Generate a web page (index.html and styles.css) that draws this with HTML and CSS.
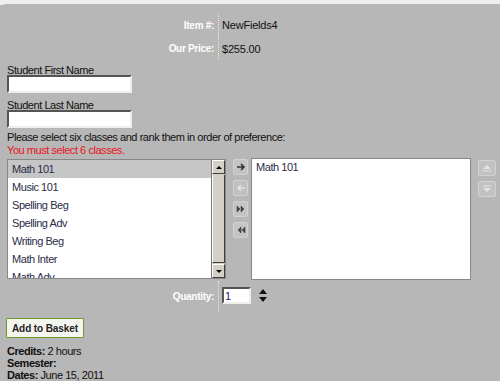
FILE: index.html
```html
<!DOCTYPE html>
<html lang="en">
<head>
    <meta charset="UTF-8">
    <title>NewFields4</title>
    <link rel="stylesheet" href="styles.css">
</head>
<body>
    <div class="top-strip"></div>

    <div class="panel">
        <!-- item info -->
        <div class="info">
            <div class="info-row">
                <span class="info-label">Item #:</span>
                <span class="info-value">NewFields4</span>
            </div>
            <div class="info-row">
                <span class="info-label">Our Price:</span>
                <span class="info-value">$255.00</span>
            </div>
        </div>

        <div class="field">
            <label class="field-label">Student First Name</label>
            <input class="text-input" type="text">
        </div>
        <div class="field">
            <label class="field-label">Student Last Name</label>
            <input class="text-input" type="text">
        </div>

        <p class="prompt">Please select six classes and rank them in order of preference:</p>
        <p class="error">You must select 6 classes.</p>

        <div class="picker">
            <div class="listbox listbox-left">
                <ul class="options">
                    <li class="selected">Math 101</li>
                    <li>Music 101</li>
                    <li>Spelling Beg</li>
                    <li>Spelling Adv</li>
                    <li>Writing Beg</li>
                    <li>Math Inter</li>
                    <li>Math Adv</li>
                </ul>
                <div class="scrollbar">
                    <div class="sb-btn"><span class="tri-up"></span></div>
                    <div class="sb-track"><div class="sb-thumb"></div></div>
                    <div class="sb-btn"><span class="tri-down"></span></div>
                </div>
            </div>

            <div class="move-buttons">
                <button class="move-btn">
                    <svg width="10" height="8" viewBox="0 0 10 8"><path d="M1 4h6M5 1l3 3-3 3" stroke="#333" stroke-width="1.6" fill="none"/></svg>
                </button>
                <button class="move-btn disabled">
                    <svg width="10" height="8" viewBox="0 0 10 8"><path d="M9 4H3M5 1L2 4l3 3" stroke="#e2e2e2" stroke-width="1.6" fill="none"/></svg>
                </button>
                <button class="move-btn">
                    <svg width="10" height="8" viewBox="0 0 10 8"><path d="M1 1l3 3-3 3zM5 1l3 3-3 3z" fill="#444" stroke="#444" stroke-width="0.6"/></svg>
                </button>
                <button class="move-btn">
                    <svg width="10" height="8" viewBox="0 0 10 8"><path d="M5 1L2 4l3 3zM9 1L6 4l3 3z" fill="#444" stroke="#444" stroke-width="0.6"/></svg>
                </button>
            </div>

            <div class="listbox listbox-right">
                <ul class="options">
                    <li>Math 101</li>
                </ul>
            </div>

            <div class="order-buttons">
                <button class="order-btn">
                    <svg width="10" height="8" viewBox="0 0 10 8"><path d="M5 1l4 4H1z" fill="#e4e4e4"/><path d="M1 7h8" stroke="#e4e4e4"/></svg>
                </button>
                <button class="order-btn">
                    <svg width="10" height="8" viewBox="0 0 10 8"><path d="M1 1h8" stroke="#e4e4e4"/><path d="M1 3h8L5 7z" fill="#e4e4e4"/></svg>
                </button>
            </div>
        </div>

        <div class="info qty">
            <div class="info-row">
                <span class="info-label">Quantity:</span>
                <span class="info-value">
                    <input class="qty-input" type="text" value="1">
                    <svg class="spinner" width="10" height="13" viewBox="0 0 10 13"><path d="M5 0l4 5H1zM1 8h8l-4 5z" fill="#111"/></svg>
                </span>
            </div>
        </div>

        <button class="basket-btn">Add to Basket</button>

        <div class="details">
            <div><b>Credits:</b> 2 hours</div>
            <div><b>Semester:</b></div>
            <div><b>Dates:</b> June 15, 2011</div>
        </div>
    </div>
</body>
</html>
```

FILE: styles.css
```css
body {
    margin: 0;
    background: #b7b7b7;
    font-family: "Liberation Sans", Arial, sans-serif;
    font-size: 11px;
    letter-spacing: -0.45px;
    color: #111;
}

.top-strip {
    height: 5px;
    background: #efefef;
}

.panel {
    background: #b7b7b7;
    border-top-left-radius: 6px;
    padding: 10px 0 0 7px;
    margin-top: -1px;
}

/* item info rows with dotted divider */
.info {
    display: flex;
    flex-direction: column;
}

.info-row {
    display: flex;
    align-items: center;
    height: 23px;
}

.info-label {
    width: 211px;
    text-align: right;
    color: #fff;
    font-weight: bold;
    font-size: 10px;
    letter-spacing: -0.3px;
    padding-right: 4px;
    box-sizing: border-box;
}

.info-value {
    display: flex;
    align-items: center;
    align-self: stretch;
    border-left: 1px dotted #e8e8e8;
    padding-left: 3px;
    letter-spacing: -0.2px;
}

.info .info-row:first-child .info-value {
    padding-bottom: 1px;
}

.field {
    display: flex;
    flex-direction: column;
    margin-top: 4px;
}

.field + .field {
    margin-top: 6px;
}

.field-label {
    line-height: 12px;
    margin-bottom: -1px;
}

.text-input {
    width: 125px;
    height: 18px;
    box-sizing: border-box;
    margin: 0;
    border: 2px solid;
    border-color: #555 #eee #eee #555;
    background: #fff;
}

.prompt {
    margin: 3px 0 0;
    line-height: 13px;
}

.error {
    margin: 0;
    line-height: 12px;
    color: #e8141e;
}

.picker {
    display: flex;
    align-items: flex-start;
    margin-top: 3px;
}

.listbox {
    background: #fff;
    border: 1px solid #888;
    height: 120px;
    box-sizing: border-box;
    overflow: hidden;
    display: flex;
}

.listbox-left {
    width: 219px;
}

.listbox-right {
    width: 220px;
    height: 122px;
    margin-top: -1px;
    margin-left: 3px;
}

.options {
    list-style: none;
    margin: 0;
    padding: 0;
    flex: 1;
    color: #2c2c48;
}

.options li {
    height: 18px;
    line-height: 18px;
    padding-left: 4px;
}

.listbox-right .options li {
    padding-left: 4px;
    line-height: 17px;
}

.options li.selected {
    background: #c6c6c6;
}

.scrollbar {
    width: 13px;
    display: flex;
    flex-direction: column;
    background: #d4d0c8;
    border-left: 1px solid #777;
}

.sb-btn {
    height: 12px;
    background: #d4d0c8;
    border: 1px solid;
    border-color: #fff #404040 #404040 #fff;
    display: flex;
    align-items: center;
    justify-content: center;
}

.sb-track {
    flex: 1;
    padding: 1px 0;
}

.sb-thumb {
    height: 100%;
    background: #d4d0c8;
    border-left: 1px solid #fff;
    border-bottom: 1px solid #404040;
    border-right: 1px solid #404040;
    box-sizing: border-box;
}

.tri-up, .tri-down {
    width: 0;
    height: 0;
    border-left: 3px solid transparent;
    border-right: 3px solid transparent;
}

.tri-up { border-bottom: 3px solid #000; }
.tri-down { border-top: 3px solid #000; }

.move-buttons {
    display: flex;
    flex-direction: column;
    gap: 5px;
    margin-left: 7px;
}

.move-btn, .order-btn {
    width: 15px;
    height: 16px;
    padding: 0;
    margin: 0;
    background: #c4c4c4;
    border: 1px solid #d2d2d2;
    border-radius: 2px;
    display: flex;
    align-items: center;
    justify-content: center;
}

.move-btn.disabled {
    background: #c0c0c0;
}

.order-buttons {
    display: flex;
    flex-direction: column;
    gap: 5px;
    margin-left: 7px;
    margin-top: 1px;
}

.order-btn {
    width: 18px;
    background: #c2c2c2;
}

.qty {
    margin-top: 1px;
}

.qty .info-row {
    height: 30px;
}

.qty-input {
    width: 29px;
    height: 17px;
    box-sizing: border-box;
    margin: 0;
    border: 2px solid;
    border-color: #555 #eee #eee #555;
    background: #fff;
    font: 11px "Liberation Sans", Arial, sans-serif;
    color: #1a1a7a;
    padding: 0 1px;
}

.spinner {
    margin-left: 7px;
}

.basket-btn {
    display: block;
    margin: 7px 0 0 -1px;
    height: 20px;
    padding: 0 5px;
    background: #f5f5f0;
    border: 1px solid #6f9b2a;
    border-radius: 1px;
    font: bold 10px "Liberation Sans", Arial, sans-serif;
    letter-spacing: -0.1px;
    color: #222;
}

.details {
    margin-top: 7px;
    line-height: 12px;
}

.details b {
    font-weight: bold;
}
```
